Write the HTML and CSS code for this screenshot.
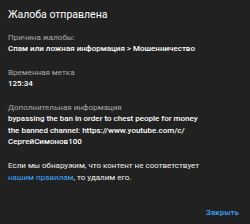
FILE: index.html
```html
<!DOCTYPE html>
<html lang="ru">
<head>
<meta charset="utf-8">
<link rel="stylesheet" href="styles.css">
</head>
<body>
<div class="dialog">
  <div class="title">Жалоба отправлена</div>
  <div class="section">
    <div class="label">Причина жалобы:</div>
    <div class="value">Спам или ложная информация &gt; Мошенничество</div>
  </div>
  <div class="section">
    <div class="label">Временная метка</div>
    <div class="value">125:34</div>
  </div>
  <div class="section">
    <div class="label">Дополнительная информация</div>
    <div class="value">bypassing the ban in order to chest people for money the banned channel: https://www.youtube.com/c/<br>СергейСимонов100</div>
  </div>
  <div class="note">Если мы обнаружим, что контент не соответствует <a class="link">нашим правилам</a>, то удалим его.</div>
  <div class="actions"><span class="close">Закрыть</span></div>
</div>
</body>
</html>
```
FILE: styles.css
```css
html, body {
  margin: 0;
  padding: 0;
  background: #212121;
}
.dialog {
  width: 250px;
  height: 224px;
  box-sizing: border-box;
  padding: 8px 8px 0 8px;
  font-family: Roboto, "Liberation Sans", sans-serif;
  color: #f1f1f1;
  display: flex;
  flex-direction: column;
}
.title {
  font-size: 10.5px;
  line-height: 13px;
  color: #fff;
  margin-bottom: 11px;
}
.section {
  margin-bottom: 12.5px;
}
.label {
  font-size: 8px;
  line-height: 11px;
  color: #aaaaaa;
}
.value {
  font-size: 8px;
  line-height: 11.5px;
  font-weight: 500;
  color: #fff;
  width: 200px;
}
.note {
  font-size: 8px;
  line-height: 12px;
  color: #f1f1f1;
  width: 200px;
}
.link {
  color: #3ea6ff;
}
.actions {
  display: flex;
  justify-content: flex-end;
  margin-top: 24px;
  padding-right: 3px;
}
.close {
  font-size: 8px;
  font-weight: 500;
  color: #3ea6ff;
}
```
